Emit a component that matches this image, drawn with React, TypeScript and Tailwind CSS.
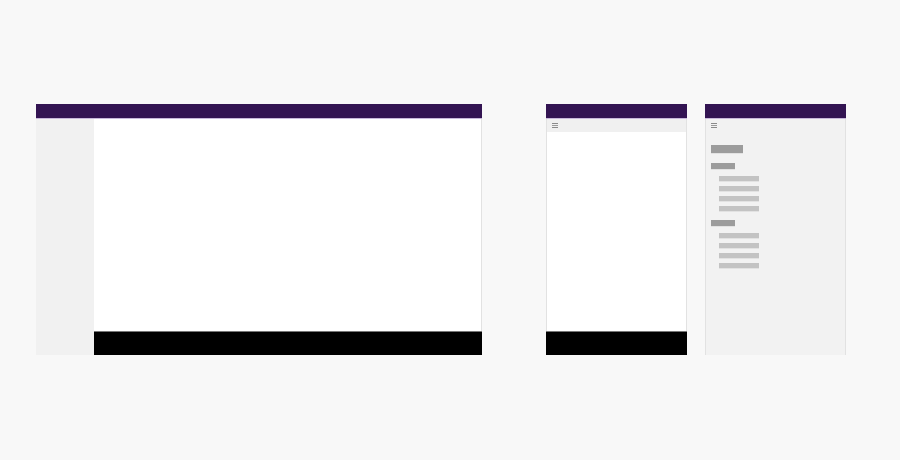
import React from "react";

function Header() {
  return <div className="h-[15px] shrink-0 border-b border-[#c8b8da] bg-[#331452]" />;
}

function MenuIcon() {
  return (
    <div className="flex h-[5px] w-[6px] flex-col justify-between">
      <span className="h-px bg-[#8a8a8a]" />
      <span className="h-px bg-[#9a9a9a]" />
      <span className="h-px bg-[#8a8a8a]" />
    </div>
  );
}

function Bar({ className }: { className: string }) {
  return <div className={`border-b border-[#e2e2e2] ${className}`} />;
}

function NavGroup() {
  return (
    <div className="flex flex-col">
      <Bar className="h-[7px] w-[24px] bg-[#9c9c9c]" />
      <div className="mt-[6px] flex flex-col gap-[4px] pl-[8px]">
        {[0, 1, 2, 3].map((i) => (
          <Bar key={i} className="h-[6px] w-[40px] bg-[#c3c3c3]" />
        ))}
      </div>
    </div>
  );
}

export default function App() {
  return (
    <div className="flex h-[460px] w-full items-start bg-[#f8f8f8] pl-[36px] pt-[104px]">
      {/* desktop */}
      <div className="flex h-[251px] w-[446px] flex-col">
        <Header />
        <div className="flex flex-1">
          <div className="w-[58px] bg-[#f1f1f1]" />
          <div className="flex flex-1 flex-col">
            <div className="flex-1 border-r border-[#e2e2e2] bg-white" />
            <div className="h-[24px] border-t border-[#777] bg-black" />
          </div>
        </div>
      </div>

      {/* mobile closed */}
      <div className="ml-[64px] flex h-[251px] w-[141px] flex-col">
        <Header />
        <div className="flex flex-1 flex-col border-x border-[#e2e2e2] bg-white">
          <div className="flex h-[13px] items-center bg-[#f0f0f0] pl-[5px]">
            <MenuIcon />
          </div>
          <div className="flex-1" />
          <div className="-mx-px h-[24px] border-t border-[#777] bg-black" />
        </div>
      </div>

      {/* mobile open */}
      <div className="ml-[18px] flex h-[251px] w-[141px] flex-col">
        <Header />
        <div className="flex flex-1 flex-col border-x border-[#e2e2e2] bg-[#f2f2f2] pl-[5px] pt-[4px]">
          <MenuIcon />
          <Bar className="mt-[17px] h-[9px] w-[32px] bg-[#9c9c9c]" />
          <div className="mt-[9px] flex flex-col gap-[8px]">
            <NavGroup />
            <NavGroup />
          </div>
        </div>
      </div>
    </div>
  );
}
